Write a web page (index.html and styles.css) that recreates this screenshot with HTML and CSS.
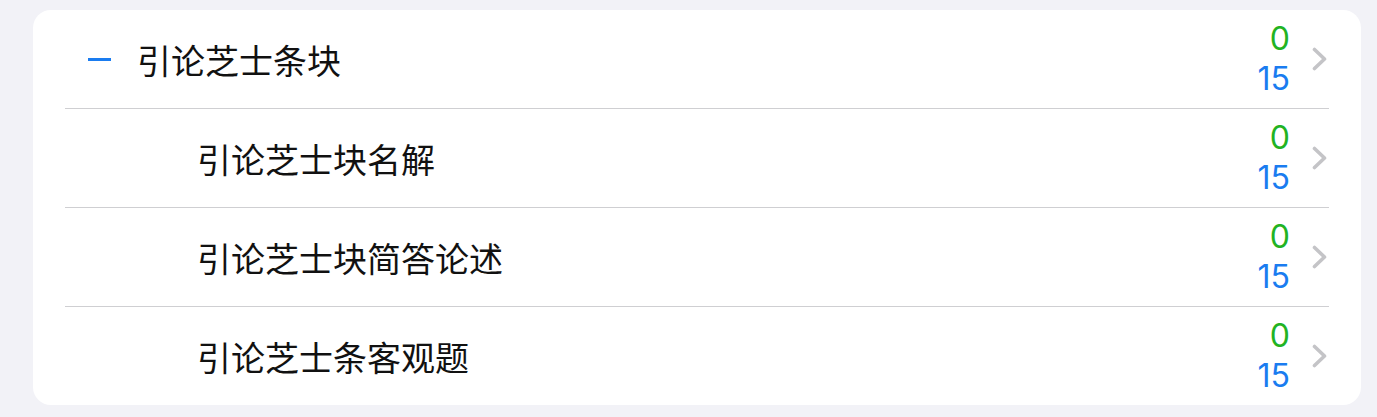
FILE: index.html
```html
<!DOCTYPE html>
<html>
<head>
    <title>引论芝士</title>
    <link rel="stylesheet" href="styles.css">
</head>
<body>
    <div class="card">
        <div class="row">
            <span class="dash"></span>
            <span class="title">引论芝士条块</span>
            <div class="counts">
                <span class="done">0</span>
                <span class="total">15</span>
            </div>
            <svg class="chevron" width="15" height="24" viewBox="0 0 15 24"><polyline points="2.5,2.5 12.5,12 2.5,21.5" fill="none" stroke="#c4c4c7" stroke-width="3.6" stroke-linecap="round" stroke-linejoin="round"/></svg>
        </div>
        <div class="row sub">
            <span class="title">引论芝士块名解</span>
            <div class="counts">
                <span class="done">0</span>
                <span class="total">15</span>
            </div>
            <svg class="chevron" width="15" height="24" viewBox="0 0 15 24"><polyline points="2.5,2.5 12.5,12 2.5,21.5" fill="none" stroke="#c4c4c7" stroke-width="3.6" stroke-linecap="round" stroke-linejoin="round"/></svg>
        </div>
        <div class="row sub">
            <span class="title">引论芝士块简答论述</span>
            <div class="counts">
                <span class="done">0</span>
                <span class="total">15</span>
            </div>
            <svg class="chevron" width="15" height="24" viewBox="0 0 15 24"><polyline points="2.5,2.5 12.5,12 2.5,21.5" fill="none" stroke="#c4c4c7" stroke-width="3.6" stroke-linecap="round" stroke-linejoin="round"/></svg>
        </div>
        <div class="row sub">
            <span class="title">引论芝士条客观题</span>
            <div class="counts">
                <span class="done">0</span>
                <span class="total">15</span>
            </div>
            <svg class="chevron" width="15" height="24" viewBox="0 0 15 24"><polyline points="2.5,2.5 12.5,12 2.5,21.5" fill="none" stroke="#c4c4c7" stroke-width="3.6" stroke-linecap="round" stroke-linejoin="round"/></svg>
        </div>
    </div>
</body>
</html>
```

FILE: styles.css
```css
body {
    margin: 0;
    padding: 10px 16px 12px 33px;
    background-color: #f2f2f7;
    font-family: "Inter", "Noto Sans CJK SC", sans-serif;
}
.card {
    background-color: #ffffff;
    border-radius: 18px;
    padding: 0 32px;
}
.row {
    display: flex;
    align-items: center;
    height: 98px;
    border-bottom: 1px solid #cfcfd2;
}
.row:last-child {
    border-bottom: none;
}
.dash {
    width: 23px;
    height: 3px;
    margin-left: 23px;
    margin-right: 26px;
    background-color: #1a7cf0;
}
.title {
    font-family: "Noto Sans CJK SC", sans-serif;
    font-size: 34px;
    color: #111111;
    flex: 1;
}
.sub .title {
    padding-left: 132px;
}
.counts {
    display: flex;
    flex-direction: column;
    align-items: flex-end;
    font-size: 32px;
    line-height: 40px;
}
.done {
    color: #22b322;
}
.total {
    color: #1a7cf0;
}
.chevron {
    margin-left: 22px;
    margin-right: 2px;
}
```
